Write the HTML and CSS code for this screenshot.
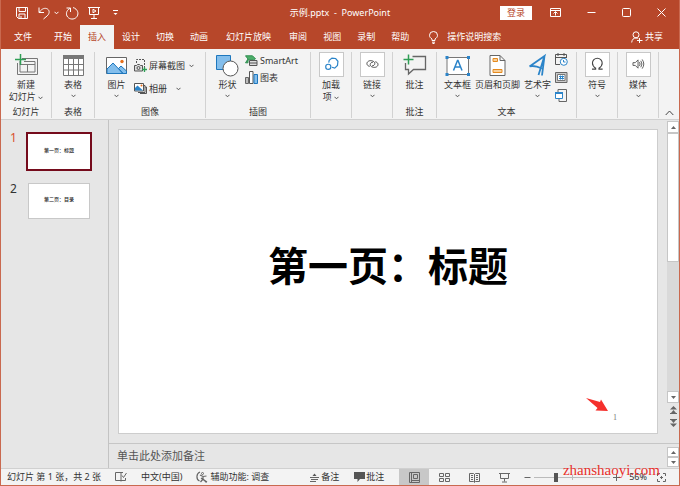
FILE: index.html
```html
<!DOCTYPE html>
<html lang="zh-CN">
<head>
  <meta charset="UTF-8">
  <meta name="viewport" content="width=device-width, initial-scale=1.0">
  <title>示例.pptx - PowerPoint</title>
  <link rel="stylesheet" href="styles.css">
</head>
<body>
  <div class="window">
    <!-- Title bar -->
    <header class="titlebar">
      <div class="quick-access">
        <button class="icon-btn" aria-label="保存"><svg width="14" height="14" viewBox="0 0 14 14"><path d="M1.500 1.500h11v11h-9l-2-2zM4 1.500v4h6.500v-4M4 12.500v-4.500h6v4.500M6 10v2.500"/></svg></button>
        <button class="icon-btn undo" aria-label="撤消"><svg width="14" height="14" viewBox="0 0 14 14"><path d="M2 1.500v5h5M2.300 6.200C5 2.500 8 1.500 10.500 3c2.500 1.700 2 5-.5 7L6.500 13"/></svg></button>
        <button class="icon-btn drop" aria-label="撤消选项"><svg width="5" height="4" viewBox="0 0 5 4"><path d="M.5 .8l2 2 2-2"/></svg></button>
        <button class="icon-btn redo" aria-label="重复"><svg width="14" height="14" viewBox="0 0 14 14"><path d="M1.500 2h4v4M5.200 2.300C2 3.800.6 7 2 10c1.600 3 5.500 3.900 8.300 2.200 3.200-2 3.500-6.500.7-9C10 2.300 9 1.800 8 1.600"/></svg></button>
        <button class="icon-btn show" aria-label="从头开始"><svg width="14" height="14" viewBox="0 0 14 14"><path d="M1 1.500h12M2.500 1.500v7h9v-7M7 8.500v4M4 12.500h6"/><path d="M6 3.200v3.600l3-1.800z"/></svg></button>
        <button class="icon-btn more" aria-label="自定义"><svg width="5" height="6" viewBox="0 0 5 6"><path d="M0 .5h5"/><path class="solid" d="M.5 3h4l-2 2z"/></svg></button>
      </div>
      <h1 class="doc-title">示例.pptx&nbsp; - &nbsp;PowerPoint</h1>
      <div class="window-tools">
        <button class="sign-in">登录</button>
        <button class="icon-btn" aria-label="功能区显示选项"><svg width="11" height="9" viewBox="0 0 11 9"><path d="M.5 .5h10v8H.5zM.5 2.500h10M5.500 7.500V4M3.500 5.500l2-2 2 2"/></svg></button>
        <button class="icon-btn" aria-label="最小化"><svg width="9" height="9" viewBox="0 0 9 9"><path d="M.5 4.500h8"/></svg></button>
        <button class="icon-btn" aria-label="最大化"><svg width="9" height="9" viewBox="0 0 9 9"><rect x=".5" y=".5" width="8" height="8" rx="1"/></svg></button>
        <button class="icon-btn" aria-label="关闭"><svg width="9" height="9" viewBox="0 0 9 9"><path d="M.5 .5l8 8M8.500 .5l-8 8"/></svg></button>
      </div>
    </header>

    <!-- Tabs -->
    <nav class="tabs">
      <button class="tab file">文件</button>
      <button class="tab">开始</button>
      <button class="tab active">插入</button>
      <button class="tab">设计</button>
      <button class="tab">切换</button>
      <button class="tab">动画</button>
      <button class="tab wide">幻灯片放映</button>
      <button class="tab">审阅</button>
      <button class="tab">视图</button>
      <button class="tab">录制</button>
      <button class="tab">帮助</button>
      <label class="tell-me">
        <svg width="9" height="13" viewBox="0 0 9 13"><path d="M3 9.500V8C1.500 7 .5 6 .5 4.300a4 3.800 0 0 1 8 0C8.500 6 7.500 7 6 8v1.500zM3 11.200h3M3.500 12.500h2"/></svg>
        <input type="text" placeholder="操作说明搜索" aria-label="操作说明搜索">
      </label>
      <button class="share">
        <svg width="12" height="12" viewBox="0 0 12 12"><circle cx="5" cy="3.800" r="3"/><path d="M.7 11.500C1 8.500 2.500 7 5 7c1 0 1.700.2 2.300.7M8.500 7v5M6 9.500h5.500"/></svg>
        共享
      </button>
    </nav>

    <!-- Ribbon -->
    <section class="ribbon">
      <div class="group">
        <div class="group-body">
          <button class="tool">
            <svg class="icon" width="25" height="25" viewBox="0 0 25 25"><path d="M8 6.500h15.500v16h-20V11M6 9v11h15V9.500H10M6 12.500h15M13.500 12.500v7.500" stroke="#777"/><path d="M6.500 2v11M1 7.500h11" stroke="#2f9e55" stroke-width="1.500"/></svg>
            <span>新建</span>
            <span>幻灯片 <svg class="caret" width="5" height="4" viewBox="0 0 5 4"><path d="M.5 .8l2 2 2-2"/></svg></span>
          </button>
        </div>
        <div class="group-name">幻灯片</div>
      </div>

      <div class="group">
        <div class="group-body">
          <button class="tool">
            <svg class="icon" width="25" height="25" viewBox="0 0 25 25"><path fill="#fff" d="M2.500 4.500h20v19h-20z"/><path fill="#777" d="M2 3h21v4H2z"/><path d="M2.500 3.500h20v20h-20zM7.500 7v16M12.500 7v16M17.500 7v16M2.500 12.500h20M2.500 18h20" stroke="#777"/></svg>
            <span>表格</span>
            <svg class="caret" width="5" height="4" viewBox="0 0 5 4"><path d="M.5 .8l2 2 2-2"/></svg>
          </button>
        </div>
        <div class="group-name">表格</div>
      </div>

      <div class="group">
        <div class="group-body pictures">
          <button class="tool">
            <svg class="icon" width="25" height="25" viewBox="0 0 25 25"><path fill="#fff" stroke="#666" d="M2.500 5.500h20v16h-20z"/><path fill="#83beec" stroke="#1e77bd" d="M3 17l6-6 10 10.500H3zM14.500 16.500l2.500-2.500 5.500 5v2.500H19z"/><circle cx="18" cy="9.500" r="1.700" fill="#e8701a"/></svg>
            <span>图片</span>
            <svg class="caret" width="5" height="4" viewBox="0 0 5 4"><path d="M.5 .8l2 2 2-2"/></svg>
          </button>
          <div class="stack">
            <button class="row-tool">
              <svg width="13" height="13" viewBox="0 0 13 13"><path d="M2.500 4V.5h8V8" stroke="#555" stroke-dasharray="2 1"/><path fill="#ddd" stroke="#555" d="M.5 6.500h2l1-1h2l1 1h2v5.500h-8z"/><circle cx="4.500" cy="9" r="1.500" stroke="#555"/><path d="M10.500 8v5M8 10.500h5" stroke="#2f9e55" stroke-width="1.300"/></svg>
              <span>屏幕截图</span>
              <svg class="caret" width="5" height="4" viewBox="0 0 5 4"><path d="M.5 .8l2 2 2-2"/></svg>
            </button>
            <button class="row-tool album">
              <svg width="13" height="11" viewBox="0 0 13 11"><path d="M10 2.500h1v7H4M11 4h1.500v6.500H6" stroke="#555"/><path fill="#fff" stroke="#555" d="M.5 .5h9v7.500h-9z"/><path fill="#2b84c9" d="M1 5l2.500-2.500L9 7.500H1z"/><circle cx="7.500" cy="2.500" r="1" fill="#e8701a"/></svg>
              <span>相册</span>
              <svg class="caret" width="5" height="4" viewBox="0 0 5 4"><path d="M.5 .8l2 2 2-2"/></svg>
            </button>
          </div>
        </div>
        <div class="group-name">图像</div>
      </div>

      <div class="group">
        <div class="group-body shapes">
          <button class="tool">
            <svg class="icon" width="25" height="25" viewBox="0 0 25 25"><path fill="#83beec" stroke="#1e77bd" d="M1.500 3.500h14v14h-14z"/><circle cx="15.500" cy="16.500" r="7.500" fill="#fff" stroke="#555"/></svg>
            <span>形状</span>
            <svg class="caret" width="5" height="4" viewBox="0 0 5 4"><path d="M.5 .8l2 2 2-2"/></svg>
          </button>
          <div class="stack">
            <button class="row-tool">
              <svg width="13" height="11" viewBox="0 0 13 11"><path fill="#4cae6a" stroke="#2f8f50" d="M.5 .8h7l3 3-2 1H3v3H.5L3 4z"/><path fill="#ddd" stroke="#555" d="M4.500 5.500h7.500v5H4.500zM4.500 8H12"/></svg>
              <span>SmartArt</span>
            </button>
            <button class="row-tool">
              <svg width="13" height="13" viewBox="0 0 13 13"><path fill="#bbb" stroke="#666" d="M.5 6.500h3v6h-3z"/><path fill="#fff" stroke="#555" d="M4.500 .5h3.500v12H4.500z"/><path fill="#83beec" stroke="#1e77bd" d="M9 3.500h3.500v9H9z"/></svg>
              <span>图表</span>
            </button>
          </div>
        </div>
        <div class="group-name">插图</div>
      </div>

      <div class="group">
        <div class="group-body">
          <button class="tool">
            <svg class="icon boxed" width="25" height="25" viewBox="0 0 25 25"><path d="M9.500 10.500L10 8l3-2.500 4 .5 2.500 3-.5 4.500-3 3-3-1" stroke="#2b84c9" stroke-width="1.300"/><circle cx="9" cy="15" r="2.800" stroke="#2b84c9" stroke-width="1.300"/></svg>
            <span>加载</span>
            <span>项 <svg class="caret" width="5" height="4" viewBox="0 0 5 4"><path d="M.5 .8l2 2 2-2"/></svg></span>
          </button>
        </div>
      </div>

      <div class="group">
        <div class="group-body">
          <button class="tool">
            <svg class="icon boxed" width="25" height="25" viewBox="0 0 25 25"><path d="M9.500 14.500C6 14 5.500 10.500 8 9c2-1.500 7-.5 7 2.500 0 1.500-1.500 2.500-3 2.500M15.500 9.500c3.500.7 3.800 4 1.500 5.500-2.500 1.500-7 .3-7-2.500 0-1.500 1.500-2.500 3-2.500" stroke="#444"/></svg>
            <span>链接</span>
            <svg class="caret" width="5" height="4" viewBox="0 0 5 4"><path d="M.5 .8l2 2 2-2"/></svg>
          </button>
        </div>
      </div>

      <div class="group">
        <div class="group-body">
          <button class="tool">
            <svg class="icon" width="25" height="25" viewBox="0 0 25 25"><path d="M10.500 4.500h13v13H11.500L6.500 22v-4.500h-3V11" stroke="#666" stroke-width="1.300"/><path d="M6.500 2.500v10M1.500 7.500h10" stroke="#2f9e55" stroke-width="1.500"/></svg>
            <span>批注</span>
          </button>
        </div>
        <div class="group-name">批注</div>
      </div>

      <div class="group">
        <div class="group-body texts">
          <button class="tool">
            <svg class="icon" width="25" height="25" viewBox="0 0 25 25"><path fill="#fff" stroke="#777" d="M2 5.500h21.500v17H2z"/><path d="M8.500 18.500l4-10h.5l4 10M10 15h5.500" stroke="#2b84c9" stroke-width="1.500"/><path fill="#2b84c9" d="M.5 4h3v3h-3zM22 4h3v3h-3zM.5 21h3v3h-3zM22 21h3v3h-3z"/></svg>
            <span>文本框</span>
            <svg class="caret" width="5" height="4" viewBox="0 0 5 4"><path d="M.5 .8l2 2 2-2"/></svg>
          </button>
          <button class="tool">
            <svg class="icon" width="25" height="25" viewBox="0 0 25 25"><path fill="#fff" stroke="#666" d="M5 3.500h10l5 5v15H5zM15 3.500v5h5"/><path fill="#f8cf9a" stroke="#e58a1f" d="M8 6.500h4.500v3H8zM8 17.500h9v3H8z"/></svg>
            <span>页眉和页脚</span>
          </button>
          <button class="tool">
            <svg class="icon" width="25" height="25" viewBox="0 0 25 25"><path d="M13.500 23L19.500 4 4.500 14.500M19.500 4L17 23.500M4.500 14.500c4-1.500 8 0 12.500 2" stroke="#2b84c9" stroke-width="1.800"/></svg>
            <span>艺术字</span>
            <svg class="caret" width="5" height="4" viewBox="0 0 5 4"><path d="M.5 .8l2 2 2-2"/></svg>
          </button>
          <div class="mini-tools">
            <button aria-label="日期和时间"><svg width="13" height="13" viewBox="0 0 13 13"><path d="M5 11.500H.5v-10h11V5M.5 4.500h11M3 0v3M9 0v3" stroke="#555"/><circle cx="8.800" cy="8.800" r="3.500" fill="#fff" stroke="#2b84c9"/><path d="M8.500 7v2h2" stroke="#2b84c9"/></svg></button>
            <button aria-label="幻灯片编号"><svg width="13" height="13" viewBox="0 0 13 13"><path fill="#ccc" stroke="#666" d="M.5 1.500h11.500v10H.5z"/><path fill="#fff" stroke="#777" d="M2.500 3.500H10v6H2.500z"/><path d="M5.500 4.500v4M7.500 4.500v4M4 5.500h5M4 7.500h5" stroke="#2b84c9"/></svg></button>
            <button aria-label="对象"><svg width="13" height="13" viewBox="0 0 13 13"><path d="M3 3.500v-3h8.500v12H4V10" stroke="#666"/><path fill="#fff" stroke="#2b84c9" d="M.5 3.500h7v6h-7z"/><path fill="#2b84c9" d="M0 3h8v2H0z"/></svg></button>
          </div>
        </div>
        <div class="group-name">文本</div>
      </div>

      <div class="group">
        <div class="group-body">
          <button class="tool">
            <svg class="icon boxed" width="25" height="25" viewBox="0 0 25 25"><path d="M6.500 17.500h4v-1C8 15 7 13 7 11a5.300 5.300 0 0 1 10.600 0c0 2-1 4-3.500 5.500v1h4" stroke="#444" stroke-width="1.200"/></svg>
            <span>符号</span>
            <svg class="caret" width="5" height="4" viewBox="0 0 5 4"><path d="M.5 .8l2 2 2-2"/></svg>
          </button>
        </div>
      </div>

      <div class="group">
        <div class="group-body">
          <button class="tool">
            <svg class="icon boxed" width="25" height="25" viewBox="0 0 25 25"><path d="M6.500 10.500H9l3-3v9l-3-3H6.500zM13.500 10q1.500 2 0 4M15 8.500q2.500 3.500 0 7M16.500 7q3.500 5 0 10" stroke="#555"/></svg>
            <span>媒体</span>
            <svg class="caret" width="5" height="4" viewBox="0 0 5 4"><path d="M.5 .8l2 2 2-2"/></svg>
          </button>
        </div>
      </div>

      <button class="collapse" aria-label="折叠功能区"><svg width="9" height="6" viewBox="0 0 9 6"><path d="M.7 5l3.800-4 3.800 4"/></svg></button>
    </section>

    <!-- Workspace -->
    <main class="workspace">
      <aside class="thumbs">
        <div class="thumb-row current">
          <span class="thumb-num">1</span>
          <button class="thumb">第一页：标题</button>
        </div>
        <div class="thumb-row">
          <span class="thumb-num">2</span>
          <button class="thumb">第二页：目录</button>
        </div>
      </aside>

      <div class="editor">
        <div class="stage">
          <article class="slide">
            <h2 class="slide-title">第一页：标题</h2>
            <svg class="pointer" width="24" height="16" viewBox="0 0 24 16"><path fill="#f5302c" d="M1 1l14 4 1-2.500L23 14 10.500 13.500l2-2.500z"/></svg>
            <span class="slide-num">1</span>
          </article>
        </div>
        <div class="scrollbar">
          <button aria-label="向上滚动"><svg width="5" height="3" viewBox="0 0 5 3"><path d="M0 3h5L2.500 0z"/></svg></button>
          <div class="track"><div class="handle"></div></div>
          <button aria-label="向下滚动"><svg width="5" height="3" viewBox="0 0 5 3"><path d="M0 0h5L2.500 3z"/></svg></button>
          <button class="flat" aria-label="上一张幻灯片"><svg width="7" height="8" viewBox="0 0 7 8"><path d="M0 3.500h7L3.500 0zM1 7h5L3.500 4zM0 7h7v1H0z"/></svg></button>
          <button class="flat" aria-label="下一张幻灯片"><svg width="7" height="8" viewBox="0 0 7 8"><path d="M0 0h7v1H0zM1 1h5L3.500 4zM0 4.500h7L3.500 8z"/></svg></button>
        </div>
        <div class="notes">
          <input type="text" placeholder="单击此处添加备注" aria-label="备注">
          <div class="notes-scroll">
            <button aria-label="向上滚动备注"><svg width="5" height="3" viewBox="0 0 5 3"><path d="M0 3h5L2.500 0z"/></svg></button>
            <button aria-label="向下滚动备注"><svg width="5" height="3" viewBox="0 0 5 3"><path d="M0 0h5L2.500 3z"/></svg></button>
          </div>
        </div>
      </div>
    </main>

    <!-- Status bar -->
    <footer class="status">
      <div class="status-info">
        <span>幻灯片 第 1 张，共 2 张</span>
        <button aria-label="拼写检查"><svg width="12" height="10" viewBox="0 0 12 10"><path d="M6 8.500H.5v-8H6v9M6 .5h2M6 8.500h4.500V6M7 3.500l1.500 2L11.500 1"/></svg></button>
        <button>中文(中国)</button>
        <button><svg width="12" height="12" viewBox="0 0 12 12"><path d="M4 1C0 2.500 0 8.500 3.500 10M4 4l3 1.500 3.500-.5M7 5.500V8l3.500 3.500M7 8l-2.500 3M5 7l6 4" stroke-width="1.200"/><circle cx="6.500" cy="2.500" r="1"/></svg>辅助功能: 调查</button>
      </div>
      <div class="status-tools">
        <button class="notes-btn"><svg width="9" height="9" viewBox="0 0 9 9"><path d="M0 4.500h9M1 6.500h7M0 8.500h6"/><path class="solid" d="M2.500 3h4l-2-2.500z"/></svg>备注</button>
        <button class="comments-btn"><svg width="11" height="10" viewBox="0 0 11 10"><path class="solid" d="M0 0h11v7H6L3.500 10V7H0z"/></svg>批注</button>
        <div class="views">
          <button class="selected" aria-label="普通视图"><svg width="11" height="11" viewBox="0 0 11 11"><path d="M.5 .5h10v10H.5zM2.500 .5v10M4.500 2.500h4v4h-4zM2.500 8.500h8"/></svg></button>
          <button aria-label="幻灯片浏览"><svg width="11" height="11" viewBox="0 0 11 11"><path d="M.5 1.500h4v3h-4zM6.500 1.500h4v3h-4zM.5 6.500h4v3h-4zM6.500 6.500h4v3h-4z"/></svg></button>
          <button aria-label="阅读视图"><svg width="11" height="11" viewBox="0 0 11 11"><path d="M.5 1.500h4l1 1 1-1h4v8h-4l-1 1-1-1h-4zM5.500 2v8M2 3.500h2M2 5.500h2M2 7.500h2M7 3.500h2M7 5.500h2M7 7.500h2"/></svg></button>
          <button aria-label="幻灯片放映"><svg width="11" height="11" viewBox="0 0 11 11"><path d="M0 1.500h11M1.500 1.500v5h8v-5M5.500 6.500v3M3 10h5"/></svg></button>
        </div>
        <button class="zoom-step" aria-label="缩小"><svg width="7" height="7" viewBox="0 0 7 7"><path d="M.5 3.500h6"/></svg></button>
        <input class="zoom" type="range" min="0" max="100" value="27" aria-label="缩放">
        <button class="zoom-step" aria-label="放大"><svg width="7" height="7" viewBox="0 0 7 7"><path d="M0 3.500h7M3.500 0v7"/></svg></button>
        <button class="zoom-value">56%</button>
        <button class="fit" aria-label="适应窗口"><svg width="9" height="9" viewBox="0 0 9 9"><path d="M.5 3V.5H3M6 .5h2.500V3M8.500 6v2.500H6M3 8.500H.5V6M3 4.500h3M4.500 3v3"/></svg></button>
      </div>
      <div class="site-mark">zhanshaoyi.com</div>
    </footer>
  </div>
</body>
</html>
```

FILE: styles.css
```css
* {
  box-sizing: border-box;
}
body {
  margin: 0;
  font-family: "Noto Sans", "Noto Sans CJK SC", sans-serif;
  font-size: 9px;
  line-height: 12px;
  color: #333;
}
button,
input {
  margin: 0;
  padding: 0;
  border: 0;
  background: none;
  color: inherit;
  font: inherit;
}
button {
  white-space: nowrap;
}
svg {
  flex: none;
  fill: none;
  stroke: none;
}
.window {
  display: flex;
  flex-direction: column;
  min-height: 100vh;
  border: 1px solid #c9694f;
  border-top: 0;
}

/* title bar */
.titlebar {
  display: grid;
  grid-template-columns: 1fr auto 1fr;
  align-items: center;
  height: 25px;
  background: #b7472a;
  color: #fff;
}
.quick-access {
  display: flex;
  align-items: center;
  padding-left: 14px;
}
.icon-btn {
  display: flex;
}
.icon-btn svg,
.tabs svg {
  stroke: #fff;
}
.icon-btn .solid {
  fill: #fff;
  stroke: none;
}
.undo {
  margin-left: 8px;
}
.drop {
  margin-left: 3px;
}
.redo {
  margin-left: 6px;
}
.show {
  margin-left: 8px;
}
.more {
  margin-left: 12px;
}
.doc-title {
  margin: 0;
  font-size: 9px;
  font-weight: normal;
}
.window-tools {
  display: flex;
  align-items: center;
  justify-content: flex-end;
  gap: 26px;
  padding-right: 13px;
}
.sign-in {
  width: 32px;
  height: 14px;
  margin-right: -8px;
  background: #fff;
  color: #b7472a;
}

/* tabs */
.tabs {
  display: flex;
  height: 24px;
  background: #b7472a;
  color: #fff;
}
.tab {
  padding: 0 8px;
}
.tab.file {
  padding: 0 14px 0 13px;
}
.tab.wide {
  padding: 0 10px;
}
.tab.active {
  background: #f3f3f3;
  color: #b7472a;
}
.tell-me {
  display: flex;
  align-items: center;
  gap: 9px;
  margin-left: 12px;
}
.tell-me input {
  width: 90px;
}
.tell-me input::placeholder {
  color: #fff;
  opacity: 1;
}
.share {
  display: flex;
  align-items: center;
  gap: 2px;
  margin-left: auto;
  padding-right: 16px;
}

/* ribbon */
.ribbon {
  display: grid;
  grid-template-columns: 51px 43px 111px 105px 41px 41px 44px 140px 41px 41px 1fr;
  padding: 3px 0 1px;
  background: #f3f3f3;
  border-bottom: 1px solid #d0d0d0;
}
.group {
  display: flex;
  flex-direction: column;
  height: 66px;
  border-right: 1px solid #d2d2d2;
}
.group-body {
  display: flex;
  flex: 1;
  justify-content: center;
}
.group-name {
  text-align: center;
}
.tool {
  display: flex;
  flex-direction: column;
  align-items: center;
  justify-content: flex-start;
}
.tool .icon {
  margin-bottom: 2px;
}
.boxed {
  background: #fff;
  border: 1px solid #c8c8c8;
}
.caret {
  stroke: #555;
}
.tool > .caret {
  margin-top: 3px;
}
.tool span .caret {
  vertical-align: middle;
}
.pictures,
.shapes {
  justify-content: flex-start;
  gap: 5px;
  padding-left: 9px;
}
.stack {
  display: flex;
  flex-direction: column;
  gap: 10px;
  padding-top: 7px;
}
.shapes .stack {
  gap: 4px;
  padding-top: 2px;
}
.row-tool {
  display: flex;
  align-items: center;
  gap: 2px;
  height: 13px;
}
.row-tool .caret {
  margin-left: 2px;
}
.album .caret {
  margin-left: 7px;
}
.texts {
  justify-content: flex-start;
  gap: 4px;
  padding-left: 7px;
}
.mini-tools {
  display: flex;
  flex-direction: column;
  gap: 5px;
  padding-top: 1px;
}
.mini-tools button,
.collapse {
  display: flex;
}
.collapse {
  align-self: end;
  justify-self: center;
  padding-bottom: 2px;
}
.collapse svg {
  stroke: #444;
}

/* workspace */
.workspace {
  display: flex;
  flex: 1;
  background: #e6e6e6;
}
.thumbs {
  display: flex;
  flex-direction: column;
  gap: 12px;
  width: 108px;
  padding-top: 12px;
  border-right: 1px solid #c3c3c3;
}
.thumb-row {
  display: flex;
  gap: 8px;
  padding-left: 9px;
}
.thumb-num {
  width: 8px;
  font-size: 12px;
}
.current .thumb-num {
  color: #d9502f;
}
.thumb {
  width: 66px;
  height: 39px;
  padding-bottom: 4px;
  background: #fff;
  border: 2px solid #750b1c;
  color: #222;
  font-size: 5px;
  font-weight: 500;
  line-height: 6px;
}
.thumb-row:not(.current) .thumb {
  width: 62px;
  height: 36px;
  margin-left: 2px;
  border: 1px solid #c8c8c8;
}
.editor {
  display: grid;
  flex: 1;
  grid-template-columns: 1fr 12px;
  grid-template-rows: 1fr auto;
}
.stage {
  display: flex;
  padding: 9px;
}
.slide {
  position: relative;
  display: flex;
  flex: 1;
  align-items: center;
  justify-content: center;
  padding-bottom: 32px;
  background: #fff;
  border: 1px solid #cdcdcd;
}
.slide-title {
  margin: 0;
  color: #000;
  font-size: 40px;
  line-height: 48px;
}
.pointer {
  position: absolute;
  right: 48px;
  bottom: 20px;
}
.slide-num {
  position: absolute;
  right: 40px;
  bottom: 9px;
  color: #777;
  font-family: "Liberation Serif", serif;
  font-size: 8px;
}
.scrollbar {
  display: flex;
  flex-direction: column;
  padding: 1px 0 14px;
}
.scrollbar button,
.notes-scroll button {
  display: flex;
  align-items: center;
  justify-content: center;
  height: 12px;
  background: #fff;
  border: 1px solid #c6c6c6;
}
.scrollbar svg,
.notes-scroll svg {
  fill: #666;
}
.scrollbar .flat {
  background: none;
  border: 0;
}
.scrollbar button + .flat {
  margin-top: 1px;
}
.track {
  flex: 1;
  background: #d9d9d9;
}
.handle {
  height: 50%;
  background: #fff;
  border: 1px solid #c6c6c6;
}
.notes {
  grid-column: 1 / -1;
  display: flex;
  justify-content: space-between;
  height: 25px;
  border-top: 1px solid #c6c6c6;
}
.notes input {
  flex: 1;
  padding-left: 8px;
  font-size: 11px;
}
.notes input::placeholder {
  color: #555;
  opacity: 1;
}
.notes-scroll {
  display: flex;
  flex-direction: column;
  width: 12px;
  padding-top: 3px;
}
.notes-scroll button {
  height: 10px;
}

/* status bar */
.status {
  position: relative;
  display: flex;
  justify-content: space-between;
  height: 17px;
  padding: 0 13px 0 6px;
  background: #f3f3f3;
  border-top: 1px solid #d0d0d0;
}
.status svg {
  stroke: #666;
}
.status .solid {
  fill: #555;
  stroke: none;
}
.status button {
  display: flex;
  align-items: center;
  justify-content: center;
}
.status-info,
.status-tools,
.views {
  display: flex;
  align-items: center;
}
.status-info {
  gap: 14px;
}
.status-info button,
.notes-btn {
  gap: 2px;
}
.comments-btn {
  gap: 1px;
  margin: 0 15px;
}
.views {
  align-self: stretch;
  margin-right: 5px;
}
.views button {
  width: 30px;
  height: 100%;
}
.views .selected {
  background: #c8c8c8;
}
.zoom {
  width: 76px;
  height: 10px;
  margin: 0 3px;
  appearance: none;
  background: linear-gradient(#bbb, #bbb) center / 1px 5px no-repeat, linear-gradient(#bbb, #bbb) center / 100% 1px no-repeat;
}
.zoom::-webkit-slider-thumb {
  appearance: none;
  width: 4px;
  height: 9px;
  background: #555;
}
.zoom-value {
  margin: 0 10px 0 9px;
}
.site-mark {
  position: absolute;
  right: 19px;
  bottom: 7px;
  color: #e8302c;
  font-family: "Liberation Serif", serif;
  font-size: 15px;
  line-height: 16px;
}
```
